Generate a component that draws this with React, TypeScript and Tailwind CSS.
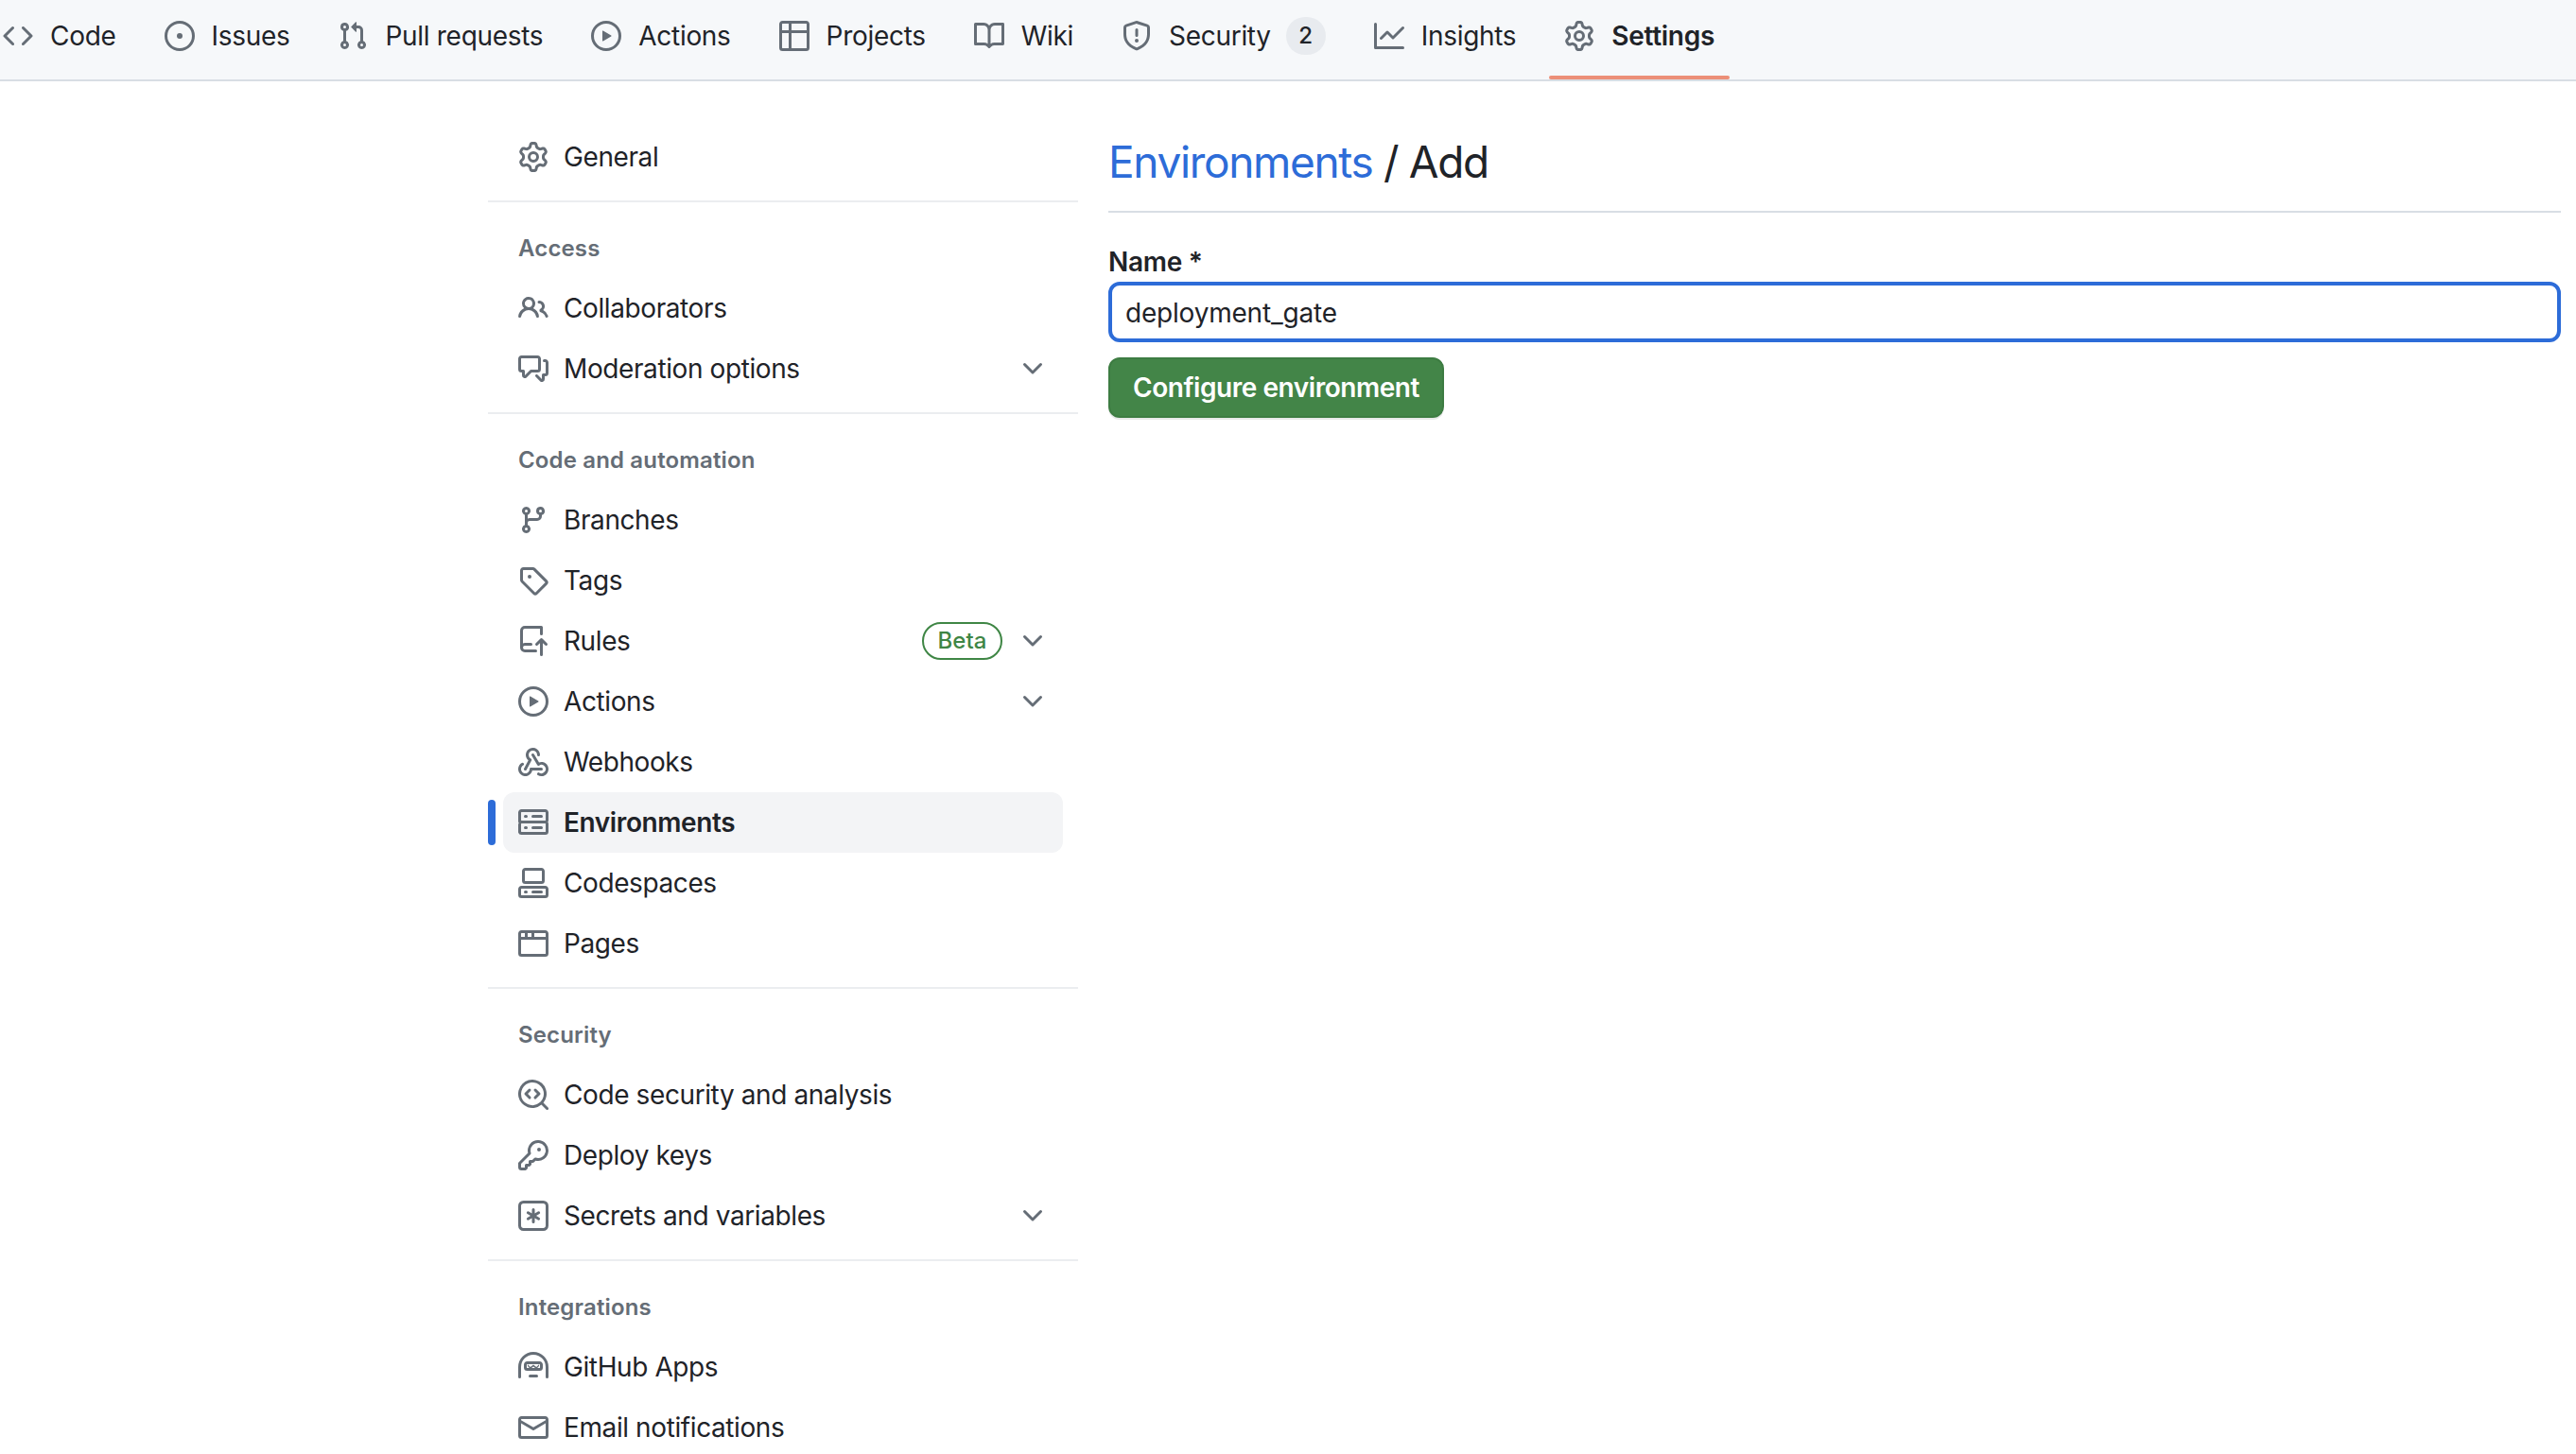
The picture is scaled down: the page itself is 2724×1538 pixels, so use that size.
import React from 'react';

interface IconProps {
  className?: string;
}

type IconType = React.FC<IconProps>;

// Octicons at their 16px size, drawn at 32px
const octicon = (...paths: string[]): IconType => ({ className }) => (
  <svg width={32} height={32} viewBox="0 0 16 16" fill="currentColor" className={className}>
    {paths.map(d => <path key={d} d={d} />)}
  </svg>
);

const CodeIcon = octicon('M11.28 3.22l4.25 4.25a.75.75 0 010 1.06l-4.25 4.25a.749.749 0 01-1.275-.326.749.749 0 01.215-.734L13.94 8l-3.72-3.72a.749.749 0 01.326-1.275.749.749 0 01.734.215zm-6.56 0a.751.751 0 011.042.018.751.751 0 01.018 1.042L2.06 8l3.72 3.72a.749.749 0 01-.326 1.275.749.749 0 01-.734-.215L.47 8.53a.75.75 0 010-1.06z');
const IssueIcon = octicon('M8 9.5a1.5 1.5 0 100-3 1.5 1.5 0 000 3z', 'M8 0a8 8 0 110 16A8 8 0 018 0zM1.5 8a6.5 6.5 0 1013 0 6.5 6.5 0 00-13 0z');
const PullIcon = octicon('M1.5 3.25a2.25 2.25 0 113 2.122v5.256a2.251 2.251 0 11-1.5 0V5.372A2.25 2.25 0 011.5 3.25zm5.677-.177L9.573.677A.25.25 0 0110 .854V2.5h1A2.5 2.5 0 0113.5 5v5.628a2.251 2.251 0 11-1.5 0V5a1 1 0 00-1-1h-1v1.646a.25.25 0 01-.427.177L7.177 3.427a.25.25 0 010-.354zM3.75 2.5a.75.75 0 100 1.5.75.75 0 000-1.5zm0 9.5a.75.75 0 100 1.5.75.75 0 000-1.5zm8.25.75a.75.75 0 101.5 0 .75.75 0 00-1.5 0z');
const PlayIcon = octicon('M8 0a8 8 0 110 16A8 8 0 018 0zM1.5 8a6.5 6.5 0 1013 0 6.5 6.5 0 00-13 0zm4.879-2.773l4.264 2.559a.25.25 0 010 .428l-4.264 2.559A.25.25 0 016 10.559V5.442a.25.25 0 01.379-.215z');
const TableIcon = octicon('M0 1.75C0 .784.784 0 1.75 0h12.5C15.216 0 16 .784 16 1.75v12.5A1.75 1.75 0 0114.25 16H1.75A1.75 1.75 0 010 14.25zM6.5 6.5v8h7.75a.25.25 0 00.25-.25V6.5zm8-1.5V1.75a.25.25 0 00-.25-.25H6.5V5zm-13 1.5v7.75c0 .138.112.25.25.25H5v-8zM5 5V1.5H1.75a.25.25 0 00-.25.25V5z');
const BookIcon = octicon('M0 1.75A.75.75 0 01.75 1h4.253c1.227 0 2.317.59 3 1.501A3.744 3.744 0 0111.006 1h4.245a.75.75 0 01.75.75v10.5a.75.75 0 01-.75.75h-4.507a2.25 2.25 0 00-1.591.659l-.622.621a.75.75 0 01-1.06 0l-.622-.621A2.25 2.25 0 005.258 13H.75a.75.75 0 01-.75-.75zm7.251 10.324l.004-5.073-.002-2.253A2.25 2.25 0 005.003 2.5H1.5v9h3.757a3.75 3.75 0 011.994.574zM8.755 4.75l-.004 7.322a3.752 3.752 0 011.992-.572H14.5v-9h-3.495a2.25 2.25 0 00-2.25 2.25z');
const ShieldIcon = octicon('M7.467.133a1.748 1.748 0 011.066 0l5.25 1.68A1.75 1.75 0 0115 3.48V7c0 1.566-.32 3.182-1.303 4.682-.983 1.498-2.585 2.813-5.032 3.855a1.697 1.697 0 01-1.33 0c-2.447-1.042-4.049-2.357-5.032-3.855C1.32 10.182 1 8.566 1 7V3.48a1.75 1.75 0 011.217-1.667zm.61 1.429a.25.25 0 00-.153 0l-5.25 1.68a.25.25 0 00-.174.238V7c0 1.358.275 2.666 1.057 3.86.784 1.194 2.121 2.34 4.366 3.297a.196.196 0 00.154 0c2.245-.956 3.582-2.104 4.366-3.298C13.225 9.666 13.5 8.36 13.5 7V3.48a.251.251 0 00-.174-.237l-5.25-1.68zM9 10.5a1 1 0 11-2 0 1 1 0 012 0zm-.25-5.75a.75.75 0 10-1.5 0v3a.75.75 0 001.5 0z');
const GraphIcon = octicon('M1.5 1.75V13.5h13.75a.75.75 0 010 1.5H.75a.75.75 0 01-.75-.75V1.75a.75.75 0 011.5 0zm14.28 2.53l-5.25 5.25a.75.75 0 01-1.06 0L7 7.06 4.28 9.78a.751.751 0 01-1.042-.018.751.751 0 01-.018-1.042l3.25-3.25a.75.75 0 011.06 0L10 7.94l4.72-4.72a.751.751 0 011.042.018.751.751 0 01.018 1.042z');
const GearIcon = octicon('M8 0a8.2 8.2 0 01.701.031C9.444.095 9.99.645 10.16 1.29l.288 1.107c.018.066.079.158.212.224.231.114.454.243.668.386.123.082.233.09.299.071l1.103-.303c.644-.176 1.392.021 1.82.63.27.385.506.792.704 1.218.315.675.111 1.422-.364 1.891l-.814.806c-.049.048-.098.147-.088.294.016.257.016.515 0 .772-.01.147.038.246.088.294l.814.806c.475.469.679 1.216.364 1.891a7.977 7.977 0 01-.704 1.217c-.428.61-1.176.807-1.82.63l-1.102-.302c-.067-.019-.177-.011-.3.071a5.909 5.909 0 01-.668.386c-.133.066-.194.158-.211.224l-.29 1.106c-.168.646-.715 1.196-1.458 1.26a8.006 8.006 0 01-1.402 0c-.743-.064-1.289-.614-1.458-1.26l-.289-1.106c-.018-.066-.079-.158-.212-.224a5.738 5.738 0 01-.668-.386c-.123-.082-.233-.09-.299-.071l-1.103.303c-.644.176-1.392-.021-1.82-.63a8.12 8.12 0 01-.704-1.218c-.315-.675-.111-1.422.363-1.891l.815-.806c.05-.048.098-.147.088-.294a6.214 6.214 0 010-.772c.01-.147-.038-.246-.088-.294l-.815-.806C.635 6.045.431 5.298.746 4.623a7.92 7.92 0 01.704-1.217c.428-.61 1.176-.807 1.82-.63l1.102.302c.067.019.177.011.3-.071.214-.143.437-.272.668-.386.133-.066.194-.158.211-.224l.29-1.106C6.009.645 6.556.095 7.299.03 7.53.01 7.764 0 8 0zm-.571 1.525c-.036.003-.108.036-.137.146l-.289 1.105c-.147.561-.549.967-.998 1.189-.173.086-.34.183-.5.29-.417.278-.97.423-1.529.27l-1.103-.303c-.109-.03-.175.016-.195.045-.22.312-.412.644-.573.99-.014.031-.021.11.059.19l.815.806c.411.406.562.957.53 1.456a4.709 4.709 0 000 .582c.032.499-.119 1.05-.53 1.456l-.815.806c-.081.08-.073.159-.059.19.162.346.353.677.573.989.02.03.085.076.195.046l1.102-.303c.56-.153 1.113-.008 1.53.27.161.107.328.204.501.29.447.222.85.629.997 1.189l.289 1.105c.029.109.101.143.137.146a6.6 6.6 0 001.142 0c.036-.003.108-.036.137-.146l.289-1.105c.147-.561.549-.967.998-1.189.173-.086.34-.183.5-.29.417-.278.97-.423 1.529-.27l1.103.303c.109.029.175-.016.195-.045.22-.313.411-.644.573-.99.014-.031.021-.11-.059-.19l-.815-.806c-.411-.406-.562-.957-.53-1.456a4.709 4.709 0 000-.582c-.032-.499.119-1.05.53-1.456l.815-.806c.081-.08.073-.159.059-.19a6.464 6.464 0 00-.573-.989c-.02-.03-.085-.076-.195-.046l-1.102.303c-.56.153-1.113.008-1.53-.27a4.44 4.44 0 00-.501-.29c-.447-.222-.85-.629-.997-1.189l-.289-1.105c-.029-.11-.101-.143-.137-.146a6.6 6.6 0 00-1.142 0zM11 8a3 3 0 11-6 0 3 3 0 016 0zM9.5 8a1.5 1.5 0 10-3.001.001A1.5 1.5 0 009.5 8z');
const PeopleIcon = octicon('M2 5.5a3.5 3.5 0 115.898 2.549 5.508 5.508 0 013.034 4.084.75.75 0 11-1.482.235 4 4 0 00-7.9 0 .75.75 0 01-1.482-.236A5.507 5.507 0 013.102 8.05 3.493 3.493 0 012 5.5zM11 4a3.001 3.001 0 012.22 5.018 5.01 5.01 0 012.56 3.012.749.749 0 01-.885.954.752.752 0 01-.549-.514 3.507 3.507 0 00-2.522-2.372.75.75 0 01-.574-.73v-.352a.75.75 0 01.416-.672A1.5 1.5 0 0011 5.5.75.75 0 0111 4zm-5.5-.5a2 2 0 10-.001 3.999A2 2 0 005.5 3.5z');
const CommentIcon = octicon('M1.75 1h8.5c.966 0 1.75.784 1.75 1.75v5.5A1.75 1.75 0 0110.25 10H7.061l-2.574 2.573A1.458 1.458 0 012 11.543V10h-.25A1.75 1.75 0 010 8.25v-5.5C0 1.784.784 1 1.75 1zM1.5 2.75v5.5c0 .138.112.25.25.25h1a.75.75 0 01.75.75v2.19l2.72-2.72a.749.749 0 01.53-.22h3.5a.25.25 0 00.25-.25v-5.5a.25.25 0 00-.25-.25h-8.5a.25.25 0 00-.25.25zm13 2a.25.25 0 00-.25-.25h-.5a.75.75 0 010-1.5h.5c.966 0 1.75.784 1.75 1.75v5.5A1.75 1.75 0 0114.25 12H14v1.543a1.458 1.458 0 01-2.487 1.03L9.22 12.28a.749.749 0 01.326-1.275.749.749 0 01.734.215l2.22 2.22v-2.19a.75.75 0 01.75-.75h1a.25.25 0 00.25-.25z');
const BranchIcon = octicon('M9.5 3.25a2.25 2.25 0 113 2.122V6A2.5 2.5 0 0110 8.5H6a1 1 0 00-1 1v1.128a2.251 2.251 0 11-1.5 0V5.372a2.25 2.25 0 111.5 0v1.836A2.493 2.493 0 016 7h4a1 1 0 001-1v-.628A2.25 2.25 0 019.5 3.25zm-6 0a.75.75 0 101.5 0 .75.75 0 00-1.5 0zm8.25-.75a.75.75 0 100 1.5.75.75 0 000-1.5zM4.25 12a.75.75 0 100 1.5.75.75 0 000-1.5z');
const TagIcon = octicon('M1 7.775V2.75C1 1.784 1.784 1 2.75 1h5.025c.464 0 .91.184 1.238.513l6.25 6.25a1.75 1.75 0 010 2.474l-5.026 5.026a1.75 1.75 0 01-2.474 0l-6.25-6.25A1.75 1.75 0 011 7.775zm1.5 0c0 .066.026.13.073.177l6.25 6.25a.25.25 0 00.354 0l5.025-5.025a.25.25 0 000-.354l-6.25-6.25a.25.25 0 00-.177-.073H2.75a.25.25 0 00-.25.25zM6 5a1 1 0 110 2 1 1 0 010-2z');
const RepoPushIcon = octicon('M1 2.5A2.5 2.5 0 013.5 0h8.75a.75.75 0 01.75.75v3.5a.75.75 0 01-1.5 0V1.5h-8a1 1 0 00-1 1v6.708A2.493 2.493 0 013.5 9h3.25a.75.75 0 010 1.5H3.5a1 1 0 000 2h5.75a.75.75 0 010 1.5H3.5A2.5 2.5 0 011 11.5zm13.23 7.79h-.001l-1.224-1.224v6.184a.75.75 0 01-1.5 0V9.066L10.28 10.29a.75.75 0 01-1.06-1.061l2.505-2.504a.75.75 0 011.06 0L15.29 9.23a.751.751 0 01-.018 1.042.751.751 0 01-1.042.018z');
const WebhookIcon = octicon(
  'M5.5 4.25a2.25 2.25 0 0 1 4.5 0 .75.75 0 0 0 1.5 0 3.75 3.75 0 1 0-6.14 2.889l-2.272 4.258a.75.75 0 0 0 1.324.706L7 7.25a.75.75 0 0 0-.309-1.015A2.25 2.25 0 0 1 5.5 4.25Z',
  'M7.364 3.607a.75.75 0 0 1 1.03.257l2.608 4.349a3.75 3.75 0 1 1-.628 6.785.75.75 0 0 1 .752-1.299 2.25 2.25 0 1 0-.033-3.88.75.75 0 0 1-1.03-.256L7.107 4.636a.75.75 0 0 1 .257-1.03Z',
  'M2.9 8.776A.75.75 0 0 1 2.625 9.8 2.25 2.25 0 1 0 6 11.75a.75.75 0 0 1 .75-.751h5.5a.75.75 0 0 1 0 1.5H7.425a3.751 3.751 0 1 1-5.55-3.998.75.75 0 0 1 1.024.274Z',
);
const ServerIcon = octicon('M1.75 1h12.5c.966 0 1.75.784 1.75 1.75v4c0 .372-.116.717-.314 1 .198.283.314.628.314 1v4a1.75 1.75 0 01-1.75 1.75H1.75A1.75 1.75 0 010 13.25v-4c0-.372.116-.717.314-1A1.739 1.739 0 010 6.75v-4C0 1.784.784 1 1.75 1zM1.5 2.75v4c0 .138.112.25.25.25h12.5a.25.25 0 00.25-.25v-4a.25.25 0 00-.25-.25H1.75a.25.25 0 00-.25.25zm.25 5.75a.25.25 0 00-.25.25v4c0 .138.112.25.25.25h12.5a.25.25 0 00.25-.25v-4a.25.25 0 00-.25-.25zM7 4.75A.75.75 0 017.75 4h4.5a.75.75 0 010 1.5h-4.5A.75.75 0 017 4.75zM7.75 10h4.5a.75.75 0 010 1.5h-4.5a.75.75 0 010-1.5zM3 4.75A.75.75 0 013.75 4h.5a.75.75 0 010 1.5h-.5A.75.75 0 013 4.75zM3.75 10h.5a.75.75 0 010 1.5h-.5a.75.75 0 010-1.5z');
const CodespacesIcon = octicon(
  'M0 11.25c0-.966.784-1.75 1.75-1.75h12.5c.966 0 1.75.784 1.75 1.75v3A1.75 1.75 0 0114.25 16H1.75A1.75 1.75 0 010 14.25zm2-9.5C2 .784 2.784 0 3.75 0h8.5C13.216 0 14 .784 14 1.75v5a1.75 1.75 0 01-1.75 1.75h-8.5A1.75 1.75 0 012 6.75zm1.75-.25a.25.25 0 00-.25.25v5c0 .138.112.25.25.25h8.5a.25.25 0 00.25-.25v-5a.25.25 0 00-.25-.25zm-2 9.5a.25.25 0 00-.25.25v3c0 .138.112.25.25.25h12.5a.25.25 0 00.25-.25v-3a.25.25 0 00-.25-.25z',
  'M7 12.75a.75.75 0 01.75-.75h4.5a.75.75 0 010 1.5h-4.5a.75.75 0 01-.75-.75zm-4 0a.75.75 0 01.75-.75h.5a.75.75 0 010 1.5h-.5a.75.75 0 01-.75-.75z',
);
const BrowserIcon = octicon('M0 2.75C0 1.784.784 1 1.75 1h12.5c.966 0 1.75.784 1.75 1.75v10.5A1.75 1.75 0 0114.25 15H1.75A1.75 1.75 0 010 13.25zM14.5 6h-13v7.25c0 .138.112.25.25.25h12.5a.25.25 0 00.25-.25zm-6-3.5v2h6V2.75a.25.25 0 00-.25-.25zM5 2.5v2h2v-2zm-3.25 0a.25.25 0 00-.25.25V4.5h2v-2z');
const CodescanIcon = octicon(
  'M8.47 4.97a.75.75 0 000 1.06L9.94 7.5 8.47 8.97a.75.75 0 101.06 1.06l2-2a.75.75 0 000-1.06l-2-2a.75.75 0 00-1.06 0zM6.53 6.03a.75.75 0 00-1.06-1.06l-2 2a.75.75 0 000 1.06l2 2a.75.75 0 101.06-1.06L5.06 7.5l1.47-1.47z',
  'M12.246 13.307a7.501 7.501 0 111.06-1.06l2.474 2.473a.749.749 0 01-.326 1.275.749.749 0 01-.734-.215zM1.5 7.5a6.002 6.002 0 003.608 5.504 6.002 6.002 0 006.486-1.117.748.748 0 01.292-.293A6 6 0 101.5 7.5z',
);
const KeyIcon = octicon('M10.5 0a5.499 5.499 0 11-1.288 10.848l-.932.932a.749.749 0 01-.53.22H7v.75a.749.749 0 01-.22.53l-.5.5a.749.749 0 01-.53.22H5v.75a.749.749 0 01-.22.53l-.5.5a.749.749 0 01-.53.22h-2A1.75 1.75 0 010 14.25v-2c0-.199.079-.389.22-.53l4.932-4.932A5.5 5.5 0 0110.5 0zm-4 5.5c-.001.431.069.86.205 1.269a.75.75 0 01-.181.768L1.5 12.56v1.69c0 .138.112.25.25.25h1.69l.06-.06v-1.19a.75.75 0 01.75-.75h1.19l.06-.06v-1.19a.75.75 0 01.75-.75h1.19l1.023-1.025a.75.75 0 01.768-.18A4 4 0 106.5 5.5zM11 6a1 1 0 110-2 1 1 0 010 2z');
const KeyAsteriskIcon = octicon(
  'M0 2.75A2.75 2.75 0 012.75 0h10.5A2.75 2.75 0 0116 2.75v10.5A2.75 2.75 0 0113.25 16H2.75A2.75 2.75 0 010 13.25zM2.75 1.5c-.69 0-1.25.56-1.25 1.25v10.5c0 .69.56 1.25 1.25 1.25h10.5c.69 0 1.25-.56 1.25-1.25V2.75c0-.69-.56-1.25-1.25-1.25z',
  'M8 4a.75.75 0 01.75.75V6.7l1.69-.975a.75.75 0 01.75 1.3L9.5 8l1.69.976a.75.75 0 01-.75 1.298L8.75 9.3v1.951a.75.75 0 01-1.5 0V9.299l-1.69.976a.75.75 0 01-.75-1.3L6.5 8l-1.69-.975a.75.75 0 01.75-1.3l1.69.976V4.75A.75.75 0 018 4z',
);
const HubotIcon = octicon(
  'M0 8a8 8 0 0116 0v5.25a.75.75 0 01-1.5 0V8a6.5 6.5 0 10-13 0v5.25a.75.75 0 01-1.5 0z',
  'M3 6.75C3 5.784 3.784 5 4.75 5h6.5c.966 0 1.75.784 1.75 1.75v1.5A1.75 1.75 0 0111.25 10h-6.5A1.75 1.75 0 013 8.25zm1.75-.25a.25.25 0 00-.25.25v1.5c0 .138.112.25.25.25h6.5a.25.25 0 00.25-.25v-1.5a.25.25 0 00-.25-.25z',
  'M5 6.6l1.4 1.4L8 6.8l1.6 1.2L11 6.6v.9L9.6 9 8 7.8 6.4 9 5 7.5z',
  'M6.25 12h3.5a.75.75 0 010 1.5h-3.5a.75.75 0 010-1.5z',
);
const MailIcon = octicon('M1.75 2h12.5c.966 0 1.75.784 1.75 1.75v8.5A1.75 1.75 0 0114.25 14H1.75A1.75 1.75 0 010 12.25v-8.5C0 2.784.784 2 1.75 2zM1.5 12.251c0 .138.112.25.25.25h12.5a.25.25 0 00.25-.25V5.809L8.38 9.397a.75.75 0 01-.76 0L1.5 5.809v6.442zm13-8.181v-.32a.25.25 0 00-.25-.25H1.75a.25.25 0 00-.25.25v.32L8 7.88l6.5-3.81z');
const ChevronDownIcon = octicon('M12.78 5.22a.749.749 0 010 1.06l-4.25 4.25a.749.749 0 01-1.06 0L3.22 6.28a.749.749 0 111.06-1.06L8 8.939l3.72-3.719a.749.749 0 011.06 0z');

interface Tab {
  label: string;
  icon: IconType;
  counter?: string;
  selected?: boolean;
}

interface SideItem {
  label: string;
  icon: IconType;
  chevron?: boolean;
  beta?: boolean;
  active?: boolean;
}

interface SideGroup {
  title?: string;
  items: SideItem[];
}

const tabs: Tab[] = [
  { label: 'Code', icon: CodeIcon },
  { label: 'Issues', icon: IssueIcon },
  { label: 'Pull requests', icon: PullIcon },
  { label: 'Actions', icon: PlayIcon },
  { label: 'Projects', icon: TableIcon },
  { label: 'Wiki', icon: BookIcon },
  { label: 'Security', icon: ShieldIcon, counter: '2' },
  { label: 'Insights', icon: GraphIcon },
  { label: 'Settings', icon: GearIcon, selected: true },
];

const groups: SideGroup[] = [
  { items: [{ label: 'General', icon: GearIcon }] },
  {
    title: 'Access',
    items: [
      { label: 'Collaborators', icon: PeopleIcon },
      { label: 'Moderation options', icon: CommentIcon, chevron: true },
    ],
  },
  {
    title: 'Code and automation',
    items: [
      { label: 'Branches', icon: BranchIcon },
      { label: 'Tags', icon: TagIcon },
      { label: 'Rules', icon: RepoPushIcon, beta: true, chevron: true },
      { label: 'Actions', icon: PlayIcon, chevron: true },
      { label: 'Webhooks', icon: WebhookIcon },
      { label: 'Environments', icon: ServerIcon, active: true },
      { label: 'Codespaces', icon: CodespacesIcon },
      { label: 'Pages', icon: BrowserIcon },
    ],
  },
  {
    title: 'Security',
    items: [
      { label: 'Code security and analysis', icon: CodescanIcon },
      { label: 'Deploy keys', icon: KeyIcon },
      { label: 'Secrets and variables', icon: KeyAsteriskIcon, chevron: true },
    ],
  },
  {
    title: 'Integrations',
    items: [
      { label: 'GitHub Apps', icon: HubotIcon },
      { label: 'Email notifications', icon: MailIcon },
    ],
  },
];

const SideRow: React.FC<{ item: SideItem }> = ({ item }) => {
  const Icon = item.icon;
  return (
    <div className={`relative mx-4 flex h-16 items-center gap-4 rounded-xl px-4 ${item.active ? 'bg-[#f3f4f6]' : ''}`}>
      {item.active && <span className="absolute -left-4 top-2 h-12 w-2 rounded-md bg-[#2d6cd8]" />}
      <Icon className="shrink-0 text-[#656d76]" />
      <span className={`flex-1 text-[28px] leading-10 tracking-[-0.4px] text-[#1f2328] ${item.active ? 'font-semibold' : ''}`}>{item.label}</span>
      {item.beta && (
        <span className="flex h-10 w-[85px] items-center justify-center rounded-full border-2 border-[#3f8645] text-[24px] font-medium text-[#3f8645]">
          Beta
        </span>
      )}
      {item.chevron && <ChevronDownIcon className="shrink-0 text-[#656d76]" />}
    </div>
  );
};

export default function App() {
  return (
    <div className="h-[1538px] overflow-hidden bg-white font-['Inter',sans-serif] antialiased">
      {/* Repo tabs */}
      <nav className="h-[86px] overflow-hidden border-b-2 border-[#d8dee4] bg-[#f6f8fa]">
        <div className="-ml-[13px] flex h-[76px] items-center gap-[19px]">
          {tabs.map(tab => {
            const Icon = tab.icon;
            return (
              <div key={tab.label} className="relative flex h-full items-center gap-[18px] px-4">
                <Icon className="shrink-0 text-[#656d76]" />
                <span className={`text-[28px] leading-10 tracking-[-0.3px] text-[#1f2328] ${tab.selected ? 'font-semibold' : ''}`}>{tab.label}</span>
                {tab.counter && (
                  <span className="-ml-[2px] flex h-10 w-[42px] items-center justify-center rounded-full bg-[#e8ebef] text-[24px] font-medium text-[#1f2328]">
                    {tab.counter}
                  </span>
                )}
                {tab.selected && <span className="absolute -bottom-2 left-0 right-0 h-1 rounded-sm bg-[#ec8f78]" />}
              </div>
            );
          })}
        </div>
      </nav>

      <div className="ml-[516px] flex gap-8">
        {/* Settings sidebar */}
        <aside className="w-[624px] shrink-0 pt-12">
          {groups.map((group, i) => (
            <section key={i}>
              {i > 0 && <div className="mt-[14px] h-[2px] bg-[#ebedf0]" />}
              {group.title && (
                <h3 className="flex h-20 items-center pl-8 pt-[18px] text-[24px] font-semibold tracking-[0.15px] text-[#656d76]">
                  {group.title}
                </h3>
              )}
              {group.items.map(item => (
                <SideRow key={item.label} item={item} />
              ))}
            </section>
          ))}
        </aside>

        {/* Add environment form */}
        <main className="w-[1536px] pt-[49px]">
          <h1 className="border-b-2 border-[#d8dee4] pb-4 text-[46px] leading-[72px] tracking-[-1.35px] text-[#1f2328]">
            <span className="text-[#2d6cd8]">Environments</span> / Add
          </h1>
          <label className="mt-8 block text-[28px] font-semibold leading-10 tracking-[-0.3px] text-[#1f2328]">Name *</label>
          <input
            type="text"
            readOnly
            value="deployment_gate"
            className="mt-[1px] block h-16 w-full rounded-xl border-4 border-[#2d6cd8] bg-white px-[14px] pt-[2px] text-[28px] tracking-[-0.2px] text-[#1f2328] outline-none"
          />
          <button className="mt-4 block h-16 w-[355px] rounded-xl border-2 border-[#3d7c42] bg-[#438548] text-[28px] font-semibold tracking-[-0.45px] text-white shadow-[0_2px_0_rgba(31,35,40,0.1)]">
            Configure environment
          </button>
        </main>
      </div>
    </div>
  );
}
